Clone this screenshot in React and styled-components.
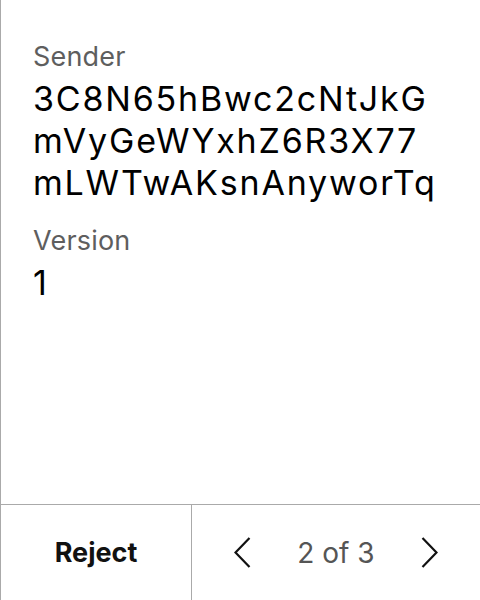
import React from 'react';
import styled, { createGlobalStyle } from 'styled-components';

const GlobalStyle = createGlobalStyle`
  html, body {
    margin: 0;
    padding: 0;
    background: #fff;
  }
  body {
    font-family: Inter, "Liberation Sans", sans-serif;
  }
`;

const Screen = styled.div`
  width: 480px;
  height: 600px;
  box-sizing: border-box;
  border-left: 1px solid #aaa;
  display: flex;
  flex-direction: column;
  background: #fff;
`;

const Content = styled.div`
  flex: 1;
  padding: 40px 0 0 32px;
  display: flex;
  flex-direction: column;
  gap: 20px;
`;

const Field = styled.div`
  display: flex;
  flex-direction: column;
  gap: 4px;
`;

const Label = styled.div`
  font-size: 27px;
  line-height: 34px;
  letter-spacing: 0.2px;
  color: #5e5e5e;
`;

const Value = styled.div`
  font-size: 34px;
  line-height: 42px;
  letter-spacing: 1.8px;
  color: #000;
  white-space: pre-line;
`;

const Footer = styled.div`
  height: 95px;
  border-top: 1px solid #aaa;
  display: grid;
  grid-template-columns: 191px 1fr;
`;

const RejectButton = styled.button`
  border: none;
  border-right: 1px solid #aaa;
  background: none;
  font-family: inherit;
  font-size: 27px;
  font-weight: 700;
  color: #111;
  cursor: pointer;
`;

const Pager = styled.div`
  display: flex;
  align-items: center;
  justify-content: center;
  gap: 46px;
`;

const PageText = styled.span`
  font-size: 28px;
  color: #555;
`;

const ArrowButton = styled.button`
  border: none;
  background: none;
  padding: 0;
  display: flex;
  cursor: pointer;
`;

const Chevron = ({ dir }) => (
  <svg width="17" height="31" viewBox="0 0 17 31" fill="none">
    <path
      d={dir === 'left' ? 'M15.5 1 L1.5 15.5 L15.5 30' : 'M1.5 1 L15.5 15.5 L1.5 30'}
      stroke="#111"
      strokeWidth="2.2"
    />
  </svg>
);

export default function App() {
  return (
    <>
      <GlobalStyle />
      <Screen>
        <Content>
          <Field>
            <Label>Sender</Label>
            <Value>{'3C8N65hBwc2cNtJkG\nmVyGeWYxhZ6R3X77\nmLWTwAKsnAnyworTq'}</Value>
          </Field>
          <Field>
            <Label>Version</Label>
            <Value>1</Value>
          </Field>
        </Content>
        <Footer>
          <RejectButton>Reject</RejectButton>
          <Pager>
            <ArrowButton><Chevron dir="left" /></ArrowButton>
            <PageText>2 of 3</PageText>
            <ArrowButton><Chevron dir="right" /></ArrowButton>
          </Pager>
        </Footer>
      </Screen>
    </>
  );
}
